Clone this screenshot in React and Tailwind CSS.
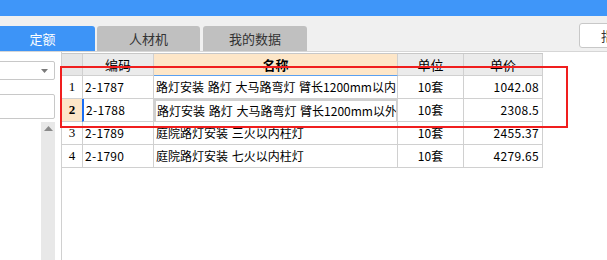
import React from 'react'

const rows = [
  { no: '1', code: '2-1787', name: '路灯安装 路灯 大马路弯灯 臂长1200mm以内', unit: '10套', price: '1042.08' },
  { no: '2', code: '2-1788', name: '路灯安装 路灯 大马路弯灯 臂长1200mm以外', unit: '10套', price: '2308.5', active: true },
  { no: '3', code: '2-1789', name: '庭院路灯安装 三火以内柱灯', unit: '10套', price: '2455.37' },
  { no: '4', code: '2-1790', name: '庭院路灯安装 七火以内柱灯', unit: '10套', price: '4279.65' },
]

const cols = 'grid grid-cols-[21px_71px_244px_66px_79px]'

const App = () => {
  return (
    <div
      className="relative w-[607px] h-[260px] overflow-hidden bg-white text-black"
      style={{ fontFamily: '"Noto Sans CJK SC", "Noto Sans", sans-serif' }}
    >
      {/* Title bar */}
      <div className="h-[16px] bg-[#3f96f9]" />

      {/* Tabs */}
      <div className="flex h-[36px] bg-[#f0f0f0] border-b border-[#d6d6d6]">
        <div className="flex items-end gap-[2px]">
          <div className="w-[95px] h-[25px] bg-[#3d94f7] rounded-tr-[3px] flex items-center justify-center pr-[10px] text-[13px] text-white">
            定额
          </div>
          <div className="w-[103px] h-[25px] bg-[#c0c0c0] rounded-t-[3px] flex items-center justify-center text-[13px] text-[#333]">
            人材机
          </div>
          <div className="ml-[1px] w-[104px] h-[25px] bg-[#c0c0c0] rounded-t-[3px] flex items-center justify-center text-[13px] text-[#333]">
            我的数据
          </div>
        </div>
        <div className="ml-auto -mr-[20px] mt-[7px] w-[48px] h-[25px] shrink-0 bg-white border border-[#c8c8c8] rounded-[3px] flex items-center pl-[21px] text-[13px] text-[#333] whitespace-nowrap overflow-hidden">
          指标
        </div>
      </div>

      {/* Main */}
      <div className="flex h-[208px]">
        {/* Left panel */}
        <div className="w-[55px] flex flex-col">
          <div className="mt-[9px] -ml-[6px] w-[61px] h-[19px] border border-[#c8c8c8] rounded-[2px] bg-white flex items-center justify-end pr-[6px]">
            <svg width="7" height="4" viewBox="0 0 7 4">
              <path d="M0 0h7L3.5 4z" fill="#7a7a7a" />
            </svg>
          </div>
          <div className="mt-[14px] -ml-[6px] w-[61px] h-[25px] border border-[#c8c8c8] rounded-[2px] bg-white" />
          <div className="mt-[3px] ml-[41px] w-[14px] flex-1 bg-[#e8e8e8] flex justify-center pt-[4px]">
            <svg width="9" height="5" viewBox="0 0 9 5">
              <path d="M0 5h9L4.5 0z" fill="#8a8a8a" />
            </svg>
          </div>
        </div>

        {/* Table */}
        <div className="ml-[6px] flex-1 border-l border-[#d0d0d0] pt-[1px]">
          <div className="w-[481px] border-t border-[#c8c8c8]">
            <div className={`${cols} h-[22px] text-[13px]`}>
              <div className="bg-[#e6e6e6] border-r border-b border-[#d0d0d0]" />
              <div className="bg-[#ebebeb] border-r border-b border-[#d0d0d0] flex items-center justify-center">编码</div>
              <div className="bg-[#fde6c8] border-r border-[#d0d0d0] border-b border-b-[#5aa0f0] flex items-center justify-center font-bold">名称</div>
              <div className="bg-[#ebebeb] border-r border-b border-[#d0d0d0] flex items-center justify-center">单位</div>
              <div className="bg-[#ebebeb] border-r border-b border-[#d0d0d0] flex items-center justify-center">单价</div>
            </div>
            {rows.map((r) => (
              <div key={r.no} className={`${cols} h-[23px] text-[12px]`}>
                <div
                  className={`border-r border-b border-[#d0d0d0] flex items-center justify-center text-[13px] ${r.active ? 'bg-[#fde6c8] font-bold' : 'bg-white'}`}
                  style={{ fontFamily: '"Liberation Serif", serif' }}
                >
                  {r.no}
                </div>
                <div className={`border-r border-b border-[#d0d0d0] flex items-center pl-[2px] tracking-[0.3px] ${r.active ? 'border-l-2 border-l-[#1a6ef5] -ml-[1px]' : ''}`}>
                  {r.code}
                </div>
                <div className={`border-b border-[#d0d0d0] flex items-center whitespace-nowrap overflow-hidden [word-spacing:1px] ${r.active ? 'border-2 border-[#808080] pl-[1px]' : 'border-r pl-[2px]'}`}>
                  {r.name}
                </div>
                <div className="border-r border-b border-[#d0d0d0] flex items-center justify-center">{r.unit}</div>
                <div className="border-r border-b border-[#d0d0d0] flex items-center justify-end pr-[3px] tracking-[0.3px]">{r.price}</div>
              </div>
            ))}
          </div>
        </div>
      </div>

      {/* Annotation */}
      <div className="absolute left-[60px] top-[66px] w-[508px] h-[62px] border-2 border-[#f01e1e]" />
    </div>
  )
}

export default App
